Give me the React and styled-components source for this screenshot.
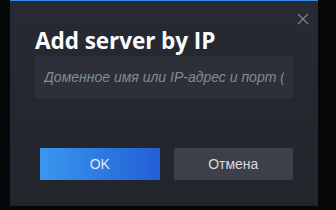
import React from 'react';
import styled, { createGlobalStyle } from 'styled-components';

const Global = createGlobalStyle`
  html, body {
    margin: 0;
    padding: 0;
    background: #060708;
    width: 336px;
    height: 210px;
    overflow: hidden;
  }
`;

const Page = styled.div`
  width: 336px;
  height: 210px;
  display: flex;
  align-items: flex-start;
  padding-left: 10px;
  box-sizing: border-box;
`;

const Dialog = styled.div`
  position: relative;
  width: 308px;
  height: 206px;
  box-sizing: border-box;
  border-top: 1px solid #2f8ef0;
  background: linear-gradient(to bottom, #272a32 0%, #22252c 100%);
  padding: 26px 25px 0 25px;
  font-family: "Open Sans", "Liberation Sans", Arial, sans-serif;
`;

const Close = styled.button`
  position: absolute;
  top: 12px;
  right: 9px;
  width: 12px;
  height: 12px;
  padding: 0;
  border: none;
  background: none;
  color: #7d818a;
  display: flex;
`;

const Title = styled.h1`
  margin: 0;
  color: #fafbfc;
  font-size: 22.6px;
  font-weight: 700;
  line-height: 28px;
  letter-spacing: -0.1px;
`;

const Input = styled.input`
  display: block;
  margin-top: 1px;
  width: 258px;
  height: 42px;
  box-sizing: border-box;
  border: none;
  border-radius: 2px;
  background: #2d3038;
  padding: 0 9px;
  color: #d0d3d8;
  font-family: "Liberation Sans", Arial, sans-serif;
  font-size: 14px;
  outline: none;
  &::placeholder {
    color: #868a92;
    font-style: italic;
  }
`;

const Buttons = styled.div`
  display: flex;
  gap: 14px;
  margin-top: 50px;
  padding-left: 5px;
`;

const Button = styled.button`
  width: 120px;
  height: 32px;
  border: none;
  border-radius: 1px;
  font-family: "Liberation Sans", Arial, sans-serif;
  font-size: 14px;
  color: ${p => (p.$primary ? '#dfe9f7' : '#d8dadd')};
  background: ${p =>
    p.$primary ? 'linear-gradient(to right, #3a97ee 0%, #2b75df 60%, #235fd6 100%)' : '#3c404a'};
`;

export default function App() {
  return (
    <>
      <Global />
      <Page>
        <Dialog>
          <Close aria-label="close">
            <svg width="12" height="12" viewBox="0 0 12 12">
              <path d="M1 1L11 11M11 1L1 11" stroke="currentColor" strokeWidth="1.2" />
            </svg>
          </Close>
          <Title>Add server by IP</Title>
          <Input placeholder="Доменное имя или IP-адрес и порт (" />
          <Buttons>
            <Button $primary>OK</Button>
            <Button>Отмена</Button>
          </Buttons>
        </Dialog>
      </Page>
    </>
  );
}
